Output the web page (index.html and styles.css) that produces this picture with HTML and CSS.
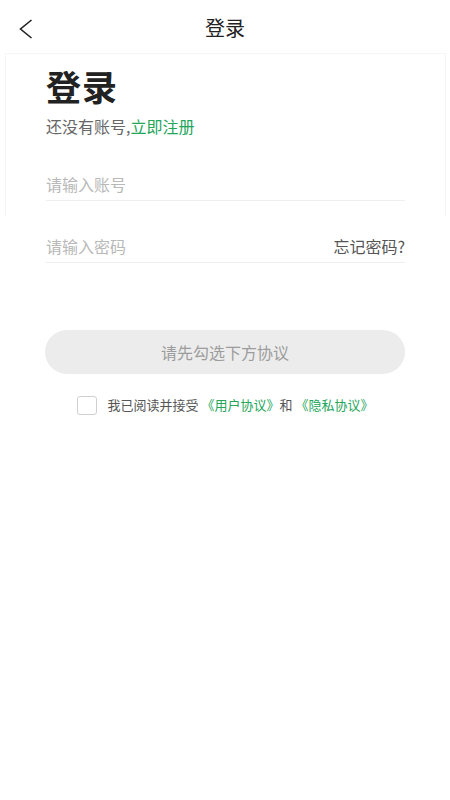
FILE: index.html
```html
<!DOCTYPE html>
<html lang="zh">
<head>
<meta charset="utf-8">
<link rel="stylesheet" href="styles.css">
</head>
<body>
<div class="page">
  <header class="topbar">
    <svg class="back" width="14" height="20" viewBox="0 0 14 20"><path d="M12.5 1 L1.5 10 L12.5 19" fill="none" stroke="#222" stroke-width="1.6" stroke-linejoin="miter"/></svg>
    <div class="topbar-title">登录</div>
  </header>
  <section class="card">
    <h1 class="title">登录</h1>
    <p class="sub">还没有账号,<span class="green">立即注册</span></p>
    <div class="field first">
      <span class="ph">请输入账号</span>
    </div>
  </section>
  <div class="field second">
    <span class="ph">请输入密码</span>
    <span class="forgot">忘记密码?</span>
  </div>
  <div class="btn">请先勾选下方协议</div>
  <div class="agree">
    <span class="box"></span>
    <span class="agree-text">我已阅读并接受 <span class="green">《用户协议》</span>和 <span class="green">《隐私协议》</span></span>
  </div>
</div>
</body>
</html>
```
FILE: styles.css
```css
* { box-sizing: border-box; }
html, body { margin: 0; padding: 0; background: #fff; }
body { font-family: "Noto Sans CJK SC", "Noto Sans", sans-serif; color: #222; }
.page { width: 450px; min-height: 800px; }
.topbar { position: relative; height: 53px; display: flex; align-items: center; justify-content: center; }
.back { position: absolute; left: 19px; top: 19px; }
.topbar-title { font-size: 20px; color: #222; line-height: 24px; margin-top: 3px; }
.card { margin: 0 4px 0 5px; border: 1px solid #f5f7f7; border-bottom: none; padding: 12px 40px 15px 40px; }
.title { margin: 0; font-size: 35px; font-weight: 700; line-height: 40px; color: #222; letter-spacing: 1px; }
.sub { margin: 9px 0 0; font-size: 16px; line-height: 22px; color: #666; }
.green { color: #23a55a; }
.field { display: flex; align-items: center; justify-content: space-between; height: 33px; border-bottom: 1px solid #efefef; font-size: 16px; }
.field.first { margin-top: 31px; }
.field.second { margin: 14px 45px 0 46px; }
.ph { color: #b8b8b8; }
.forgot { color: #555; }
.btn { margin: 67px 45px 0; height: 44px; border-radius: 22px; background: #ececec; color: #9c9c9c; font-size: 16px; display: flex; align-items: center; justify-content: center; }
.agree { margin-top: 21px; display: flex; align-items: center; justify-content: center; gap: 11px; padding-left: 0; }
.box { width: 20px; height: 19px; border: 1px solid #d0d0d0; border-radius: 3px; }
.agree-text { font-size: 13px; color: #555; line-height: 20px; }
```
